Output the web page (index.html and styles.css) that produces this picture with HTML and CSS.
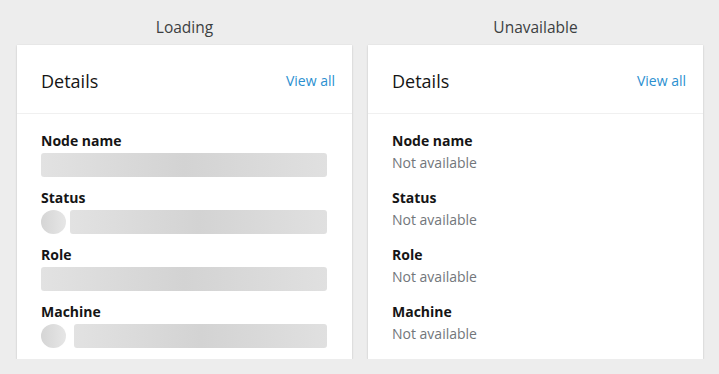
FILE: index.html
```html
<!DOCTYPE html>
<html lang="en">
<head>
    <meta charset="UTF-8">
    <meta name="viewport" content="width=device-width, initial-scale=1.0">
    <title>Details card states</title>
    <link rel="stylesheet" href="styles.css">
</head>
<body>
    <div class="states">
        <!-- Loading state -->
        <section class="state">
            <h2 class="state-title">Loading</h2>
            <div class="card">
                <div class="card-header">
                    <h3 class="card-title">Details</h3>
                    <a class="card-link" href="#">View all</a>
                </div>
                <dl class="card-body">
                    <div class="detail">
                        <dt class="detail-label">Node name</dt>
                        <dd class="detail-value"><div class="skeleton"></div></dd>
                    </div>
                    <div class="detail">
                        <dt class="detail-label">Status</dt>
                        <dd class="detail-value skeleton-row">
                            <div class="skeleton-circle"></div>
                            <div class="skeleton"></div>
                        </dd>
                    </div>
                    <div class="detail">
                        <dt class="detail-label">Role</dt>
                        <dd class="detail-value"><div class="skeleton"></div></dd>
                    </div>
                    <div class="detail">
                        <dt class="detail-label">Machine</dt>
                        <dd class="detail-value skeleton-row skeleton-row-wide">
                            <div class="skeleton-circle"></div>
                            <div class="skeleton"></div>
                        </dd>
                    </div>
                </dl>
            </div>
        </section>

        <!-- Unavailable state -->
        <section class="state">
            <h2 class="state-title">Unavailable</h2>
            <div class="card">
                <div class="card-header">
                    <h3 class="card-title">Details</h3>
                    <a class="card-link" href="#">View all</a>
                </div>
                <dl class="card-body">
                    <div class="detail">
                        <dt class="detail-label">Node name</dt>
                        <dd class="detail-value muted">Not available</dd>
                    </div>
                    <div class="detail">
                        <dt class="detail-label">Status</dt>
                        <dd class="detail-value muted">Not available</dd>
                    </div>
                    <div class="detail">
                        <dt class="detail-label">Role</dt>
                        <dd class="detail-value muted">Not available</dd>
                    </div>
                    <div class="detail">
                        <dt class="detail-label">Machine</dt>
                        <dd class="detail-value muted">Not available</dd>
                    </div>
                </dl>
            </div>
        </section>
    </div>
</body>
</html>
```

FILE: styles.css
```css
/* Base */
body {
    margin: 0;
    background: #ededed;
    font-family: 'Open Sans', 'Liberation Sans', sans-serif;
    color: #151515;
}

.states {
    display: grid;
    grid-template-columns: 335px 335px;
    column-gap: 16px;
    padding: 17px 16px 0 17px;
}

.state-title {
    margin: 0 0 8px;
    font-size: 15.5px;
    font-weight: 400;
    line-height: 20px;
    text-align: center;
    color: #3c3f42;
}

/* Card */
.card {
    background: white;
    box-shadow: 0 1px 2px rgba(0,0,0,0.16), 0 0 1px rgba(0,0,0,0.08);
}

.card-header {
    display: flex;
    justify-content: space-between;
    align-items: center;
    padding: 26px 17px 22px 24px;
    border-bottom: 1px solid #f0f0f0;
}

.card-title {
    margin: 0;
    font-size: 18px;
    font-weight: 400;
    line-height: 20px;
}

.card-link {
    font-size: 14px;
    line-height: 20px;
    color: #2b8fd0;
    text-decoration: none;
}

.card-body {
    display: flex;
    flex-direction: column;
    gap: 11px;
    margin: 0;
    padding: 17px 25px 11px 24px;
}

.detail-label {
    font-size: 14px;
    font-weight: 700;
    line-height: 20px;
}

.detail-value {
    margin: 2px 0 0;
    height: 24px;
    font-size: 14px;
    line-height: 20px;
}

.muted {
    color: #72767b;
}

/* Skeletons */
.skeleton {
    flex: 1;
    height: 24px;
    border-radius: 3px;
    background: linear-gradient(90deg, #e2e2e2, #d3d3d3 50%, #e0e0e0);
}

.skeleton-row {
    display: flex;
    gap: 4px;
}

.skeleton-row-wide {
    gap: 8px;
}

.skeleton-circle {
    width: 25px;
    height: 24px;
    border-radius: 50%;
    background: linear-gradient(90deg, #d5d5d5, #e6e6e6);
}
```
